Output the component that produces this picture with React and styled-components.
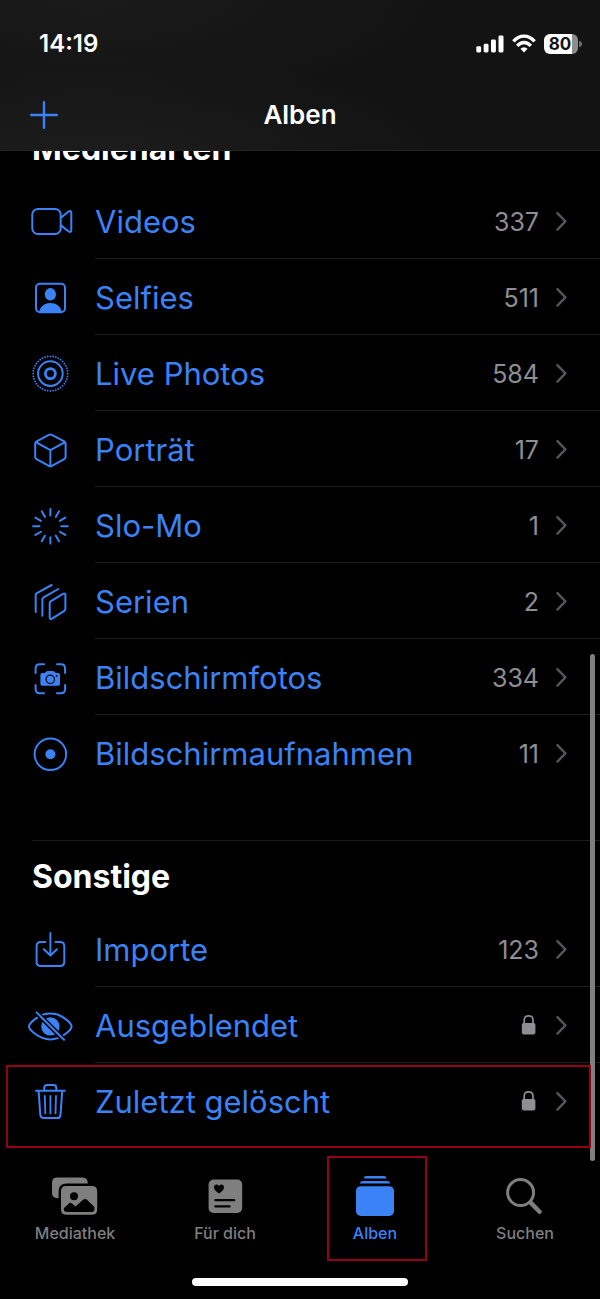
import React from 'react';
import styled, { createGlobalStyle } from 'styled-components';

const BLUE = '#3b82f7';
const RED = '#940018';

const GlobalStyle = createGlobalStyle`
  * {
    box-sizing: border-box;
  }

  body {
    margin: 0;
    background: #000000;
    color: #ffffff;
    font-family: Inter, 'Liberation Sans', sans-serif;
  }
`;

const RAYS = Array.from({ length: 12 }, (_, i) => i * 30);
const DOTS = Array.from({ length: 40 }, (_, i) => i * 9);

const icons = {
  video: (
    <>
      <rect x='6.3' y='12' width='28.4' height='25' rx='5.5' />
      <path d='M35 20.6 L42.3 14.8 Q45.3 12.8 45.3 16 V33 Q45.3 36.2 42.3 34.2 L35 28.4' />
    </>
  ),
  selfie: (
    <>
      <rect x='10' y='10.7' width='29' height='28.6' rx='4' />
      <ellipse cx='24.4' cy='21.3' rx='5.6' ry='6.2' fill={BLUE} stroke='none' />
      <path d='M13 39 C14.5 33 19 30 24.4 30 S34.5 33 36 39 Z' fill={BLUE} stroke='none' />
    </>
  ),
  live: (
    <>
      <circle cx='24.4' cy='24.6' r='12.3' />
      <circle cx='24.4' cy='24.6' r='5' strokeWidth='2.8' />
      {DOTS.map(a => (
        <circle key={a} cx='24.4' cy='7.3' r='0.9' fill={BLUE} stroke='none' transform={`rotate(${a} 24.4 24.6)`} />
      ))}
    </>
  ),
  cube: (
    <path d='M22.9 9.9 Q24.4 9 25.9 9.9 L38.2 16.3 Q39.6 17.2 39.6 18.6 V31.8 Q39.6 33.4 38.2 34.1 L25.9 40.8 Q24.4 41.6 22.9 40.8 L10.6 34.1 Q9.2 33.4 9.2 31.8 V18.6 Q9.2 17.2 10.6 16.3 Z M9.8 17.1 L24.4 25.2 L39 17.1 M24.4 25.2 V41' />
  ),
  slomo: RAYS.map(a => <path key={a} d='M24.4 14.4 V8' transform={`rotate(${a} 24.4 25.3)`} />),
  burst: (
    <>
      <path d='M23.7 26.6 Q23.7 25 25 24.2 L37 16.9 Q39.4 15.8 39.4 18 V31.6 Q39.4 33.3 38 34.1 L26 41.6 Q23.7 42.8 23.7 40.6 Z' />
      <path d='M16.4 38.7 V22.4 Q16.4 21 17.6 20.3 L32.3 12' />
      <path d='M9.7 35 V18.1 Q9.7 16.8 10.9 16.1 L25.7 8' />
    </>
  ),
  screenshot: (
    <>
      <path d='M9.6 20 V15.5 Q9.6 11.2 13.9 11.2 H18 M31 11.2 H34.8 Q39.1 11.2 39.1 15.5 V20 M39.1 32 V36 Q39.1 40.3 34.8 40.3 H31 M18 40.3 H13.9 Q9.6 40.3 9.6 36 V32' />
      <path d='M16.3 20 H18.8 L20.3 18.5 Q20.8 18 21.6 18 H27 Q27.8 18 28.3 18.5 L29.8 20 H32.2 Q34 20 34 21.8 V31 Q34 32.8 32.2 32.8 H16.3 Q14.4 32.8 14.4 31 V21.8 Q14.4 20 16.3 20 Z' fill={BLUE} stroke='none' />
      <circle cx='24.3' cy='26.3' r='4.2' stroke='#000000' strokeWidth='1.2' />
      <circle cx='30.6' cy='22.9' r='0.9' fill='#000000' stroke='none' />
    </>
  ),
  record: (
    <>
      <circle cx='24.4' cy='25.3' r='15.8' />
      <circle cx='24.4' cy='25.3' r='5' fill={BLUE} stroke='none' />
    </>
  ),
  imports: (
    <path d='M19.4 16.9 H15 Q10.6 16.9 10.6 21.3 V36.8 Q10.6 41.1 15 41.1 H34 Q38.3 41.1 38.3 36.8 V21.3 Q38.3 16.9 34 16.9 H29.4 M24.4 8 V30 M17.9 24.2 L24.4 30.5 L30.9 24.2' />
  ),
  hidden: (
    <>
      <path d='M3 25.4 C3 23 12 12.6 24.4 12.6 S45.6 23 45.6 25.4 S36.8 38.4 24.4 38.4 S3 27.8 3 25.4 Z' />
      <circle cx='24.4' cy='25.4' r='9.2' fill={BLUE} stroke='none' />
      <path d='M9.5 10.5 L39.3 40.3' stroke='#000000' strokeWidth='5' />
      <path d='M10.6 11.4 L38 38.8' />
    </>
  ),
  trash: (
    <>
      <path d='M10 13.7 H38.8 M18.2 13.4 V11 Q18.2 8.1 21.2 8.1 H27.4 Q30.3 8.1 30.3 11 V13.4' />
      <path d='M12.6 14 L14.3 37.8 Q14.6 41.1 17.9 41.1 H31 Q34.2 41.1 34.5 37.8 L36.2 14' />
      <path d='M18.8 19 L19.3 36.4 M24.4 19 V36.4 M30 19 L29.5 36.4' strokeWidth='1.8' />
    </>
  )
};

const mediaTypes = [
  { icon: 'video', label: 'Videos', count: 337 },
  { icon: 'selfie', label: 'Selfies', count: 511 },
  { icon: 'live', label: 'Live Photos', count: 584 },
  { icon: 'cube', label: 'Porträt', count: 17 },
  { icon: 'slomo', label: 'Slo-Mo', count: 1 },
  { icon: 'burst', label: 'Serien', count: 2 },
  { icon: 'screenshot', label: 'Bildschirmfotos', count: 334 },
  { icon: 'record', label: 'Bildschirmaufnahmen', count: 11 }
];

const others = [
  { icon: 'imports', label: 'Importe', count: 123 },
  { icon: 'hidden', label: 'Ausgeblendet', locked: true },
  { icon: 'trash', label: 'Zuletzt gelöscht', locked: true, marked: true }
];

const tabs = [
  {
    label: 'Mediathek',
    icon: (
      <>
        <path d='M6.4 26.2 Q1 26.2 1 20.8 V11 Q1 5.6 6.4 5.6 H31.6 Q36.8 5.6 36.8 11.6 H15.6 Q7.6 11.6 7.6 19.6 V26.2 Z' />
        <path fillRule='evenodd' d='M15.4 14 H40.8 Q46.2 14 46.2 19.4 V37.4 Q46.2 42.8 40.8 42.8 H15.4 Q10 42.8 10 37.4 V19.4 Q10 14 15.4 14 Z M23 20.2 A4 4 0 1 0 23 28.2 A4 4 0 1 0 23 20.2 Z M12.8 36.2 V37 Q12.8 40 15.8 40 H40.4 Q43.4 40 43.4 37 V35 L36 27.8 Q34 26 32 27.8 L24.6 34.4 L21 31.4 Q19.4 30 17.8 31.4 Z' />
      </>
    )
  },
  {
    label: 'Für dich',
    icon: (
      <>
        <rect x='7.6' y='7.6' width='33.6' height='33.4' rx='5' />
        <path fill='#000000' d='M18 21.6 C15 19.6 13 17.4 13 15.2 C13 11.8 16.8 11.6 18 14 C19.2 11.6 23 11.8 23 15.2 C23 17.4 21 19.6 18 21.6 Z' />
        <path stroke='#000000' strokeWidth='2.2' strokeLinecap='round' d='M14.4 28.2 H33.2 M14.4 34.4 H28.6' />
      </>
    )
  },
  {
    label: 'Alben',
    active: true,
    icon: (
      <>
        <path d='M12.8 6.4 Q13 4 15.4 4 H33 Q35.2 4 35.6 6.4 Z M8.8 11.6 Q9.2 9 11.8 9 H36.4 Q39 9 39.4 11.6 Z' />
        <rect x='5' y='14.2' width='38' height='29.8' rx='4.8' />
      </>
    )
  },
  {
    label: 'Suchen',
    icon: (
      <g fill='none' stroke='currentColor' strokeLinecap='round'>
        <circle cx='19.6' cy='20.6' r='13' strokeWidth='3' />
        <path d='M29.4 30.4 L38.6 39.8' strokeWidth='4.4' />
      </g>
    )
  }
];

const Signal = () => (
  <svg width='28' height='20' viewBox='0 0 28 20' fill='#ffffff' aria-hidden='true'>
    <rect x='0.3' y='12.2' width='4.8' height='6.2' rx='1.4' />
    <rect x='7.7' y='9.8' width='4.8' height='8.6' rx='1.4' />
    <rect x='15' y='5.6' width='4.9' height='12.8' rx='1.4' />
    <rect x='22.5' y='1.4' width='5' height='17' rx='1.4' />
  </svg>
);

const Wifi = () => (
  <svg width='24' height='20' viewBox='0 0 24 20' fill='none' stroke='#ffffff' strokeWidth='3.4' aria-hidden='true'>
    <path d='M1.4 7.4 Q6 2.1 12 2.1 T22.6 7.4' />
    <path d='M5.2 11.8 Q8.3 8.5 12 8.5 T18.8 11.8' />
    <path d='M12 18.6 L8.4 14.8 Q10.1 13.3 12 13.3 T15.6 14.8 Z' fill='#ffffff' stroke='none' />
  </svg>
);

const Lock = () => (
  <svg width='22' height='22' viewBox='0 0 22 22' role='img' aria-label='Gesperrt'>
    <rect x='4.8' y='8' width='13.6' height='11.4' rx='1.8' fill='#8e8e93' />
    <path d='M7.2 8.5 V5.2 Q7.2 0.9 11.6 0.9 T16 5.2 V8.5' fill='none' stroke='#8e8e93' strokeWidth='1.7' />
  </svg>
);

const Chevron = () => (
  <svg width='12' height='20' viewBox='0 0 12 20' fill='none' aria-hidden='true'>
    <path d='M2.4 1.2 L10.4 9.4 L2.4 17.6' stroke='#56565a' strokeWidth='2.4' strokeLinecap='round' strokeLinejoin='round' />
  </svg>
);

const AlbumList = ({ items }) => (
  <List>
    {items.map(item => (
      <Row key={item.label} $marked={item.marked}>
        <RowLink href='#'>
          <RowIcon viewBox='0 0 48 48' aria-hidden='true'>{icons[item.icon]}</RowIcon>
          <RowBody>
            <RowLabel>{item.label}</RowLabel>
            {item.locked ? <Lock /> : <Count>{item.count}</Count>}
            <Chevron />
          </RowBody>
        </RowLink>
      </Row>
    ))}
  </List>
);

const App = () => (
  <Screen>
    <GlobalStyle />
    <Header>
      <StatusBar>
        <Time>14:19</Time>
        <StatusIcons>
          <Signal />
          <Wifi />
          <Battery>
            <BatteryCell>80</BatteryCell>
            <BatteryCap />
          </Battery>
        </StatusIcons>
      </StatusBar>
      <TitleBar>
        <AddButton type='button' aria-label='Album hinzufügen'>
          <svg width='28' height='28' viewBox='0 0 28 28' fill='none' stroke={BLUE} strokeWidth='2.4' strokeLinecap='round'>
            <path d='M14 1.2 V26.8 M1.2 14 H26.8' />
          </svg>
        </AddButton>
        <Title>Alben</Title>
      </TitleBar>
    </Header>
    <Main>
      <Section>
        <Heading>Medienarten</Heading>
        <AlbumList items={mediaTypes} />
      </Section>
      <Divider />
      <Section>
        <Heading>Sonstige</Heading>
        <AlbumList items={others} />
      </Section>
    </Main>
    <TabBar>
      {tabs.map(tab => (
        <Tab key={tab.label} href='#' $active={tab.active}>
          <svg width='48' height='48' viewBox='0 0 48 48' fill='currentColor' aria-hidden='true'>{tab.icon}</svg>
          {tab.label}
        </Tab>
      ))}
    </TabBar>
    <HomeIndicator />
    <Scrollbar />
  </Screen>
);

const Screen = styled.div`
  position: relative;
  min-height: 100vh;
  background: #000000;
`;

const Header = styled.header`
  position: sticky;
  top: 0;
  z-index: 3;
  border-bottom: 1px solid #222222;
  background:
    radial-gradient(ellipse at 15% 110%, #1d1d1d, transparent 50%),
    radial-gradient(ellipse at 15% 0%, #1a1a1a, transparent 50%),
    #131313;
`;

const StatusBar = styled.div`
  display: flex;
  align-items: center;
  justify-content: space-between;
  height: 80px;
  padding: 8px 18px 0 39px;
`;

const Time = styled.span`
  font-size: 24px;
  font-weight: 600;
  line-height: 28px;
`;

const StatusIcons = styled.div`
  display: flex;
  align-items: center;
  gap: 8px;
`;

const Battery = styled.div`
  display: flex;
  align-items: center;
  gap: 1px;
`;

const BatteryCell = styled.span`
  width: 34px;
  height: 20px;
  padding-right: 2px;
  border-radius: 6px;
  background: linear-gradient(to right, #ffffff 81%, #8c8c8c 81%);
  color: #131313;
  font-size: 17px;
  font-weight: 700;
  line-height: 20px;
  text-align: center;
`;

const BatteryCap = styled.span`
  width: 3px;
  height: 6px;
  border-radius: 0 3px 3px 0;
  background: #6c6c6c;
`;

const TitleBar = styled.div`
  display: grid;
  grid-template-columns: 1fr auto 1fr;
  align-items: center;
  height: 70px;
  padding: 0 30px;
`;

const AddButton = styled.button`
  display: flex;
  justify-self: start;
  padding: 0;
  border: 0;
  background: none;
  cursor: pointer;
`;

const Title = styled.h1`
  margin: 0;
  font-size: 26px;
  font-weight: 600;
  line-height: 32px;
`;

const Main = styled.main`
  margin-top: -38px;
  padding-bottom: 17px;
`;

const Section = styled.section`
  padding-top: 16px;
`;

const Divider = styled.hr`
  height: 1px;
  margin: 49px 0 0 32px;
  border: 0;
  background: #1c1c1d;
`;

const Heading = styled.h2`
  margin: 0 0 14px;
  padding-left: 32px;
  font-size: 32px;
  font-weight: 700;
  line-height: 40px;
`;

const List = styled.ul`
  margin: 0;
  padding: 0;
  list-style: none;
`;

const Row = styled.li`
  position: relative;

  &::after {
    content: '';
    display: ${({ $marked }) => ($marked ? 'block' : 'none')};
    position: absolute;
    inset: 2px 9px -9px 6px;
    z-index: 2;
    border: 2px solid ${RED};
    pointer-events: none;
  }
`;

const RowLink = styled.a`
  display: flex;
  align-items: center;
  gap: 21px;
  padding-left: 26px;
  color: ${BLUE};
  text-decoration: none;
`;

const RowIcon = styled.svg`
  flex: none;
  width: 48px;
  height: 48px;
  fill: none;
  stroke: ${BLUE};
  stroke-width: 2px;
  stroke-linecap: round;
  stroke-linejoin: round;
`;

const RowBody = styled.div`
  display: flex;
  flex: 1;
  align-items: center;
  gap: 16px;
  height: 76px;
  padding: 2px 33px 0 0;
  border-bottom: 1px solid #1c1c1d;

  ${Row}:last-child & {
    border-bottom-color: transparent;
  }
`;

const RowLabel = styled.span`
  flex: 1;
  font-size: 31px;
  line-height: 40px;
`;

const Count = styled.span`
  color: #8e8e93;
  font-size: 25px;
  line-height: 32px;
`;

const TabBar = styled.nav`
  display: grid;
  grid-template-columns: repeat(4, 1fr);
`;

const Tab = styled.a`
  position: relative;
  display: flex;
  flex-direction: column;
  align-items: center;
  gap: 2px;
  padding: 16px 0 17px;
  color: ${({ $active }) => ($active ? BLUE : '#7f7f7f')};
  font-size: 16px;
  font-weight: 500;
  line-height: 22px;
  text-decoration: none;

  &::after {
    content: '';
    display: ${({ $active }) => ($active ? 'block' : 'none')};
    position: absolute;
    inset: 0 23px 0 27px;
    border: 2px solid ${RED};
  }
`;

const HomeIndicator = styled.div`
  width: 36%;
  height: 8px;
  margin: 17px auto 13px;
  border-radius: 4px;
  background: #ffffff;
`;

const Scrollbar = styled.div`
  position: absolute;
  right: 5px;
  bottom: 138px;
  width: 5px;
  height: 39%;
  border-radius: 3px;
  background: #7f7f7f;
`;

export default App;
